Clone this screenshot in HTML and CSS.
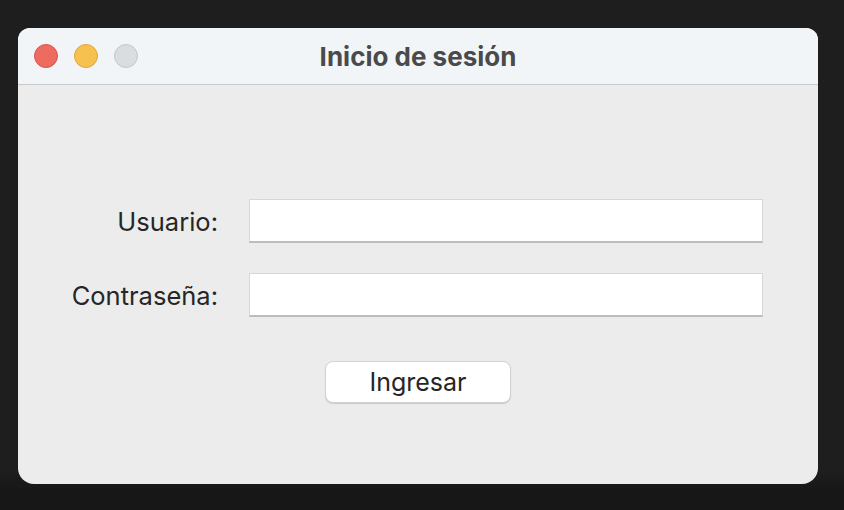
FILE: index.html
```html
<!DOCTYPE html>
<html lang="es">
<head>
<meta charset="utf-8">
<title>Inicio de sesión</title>
<link rel="stylesheet" href="styles.css">
</head>
<body>
<div class="window">
  <div class="titlebar">
    <div class="lights">
      <span class="light red"></span>
      <span class="light yellow"></span>
      <span class="light gray"></span>
    </div>
    <div class="title">Inicio de sesión</div>
  </div>
  <div class="content">
    <form class="form">
      <label class="label" for="u">Usuario:</label>
      <input class="field" id="u" type="text">
      <label class="label" for="p">Contraseña:</label>
      <input class="field" id="p" type="password">
    </form>
    <div class="actions">
      <button class="button" type="button">Ingresar</button>
    </div>
  </div>
</div>
</body>
</html>
```

FILE: styles.css
```css
* { box-sizing: border-box; }
html, body { margin: 0; padding: 0; }
body {
  width: 844px;
  height: 510px;
  background: linear-gradient(#1e1e1e 0, #1e1e1e 470px, #171717 490px);
  font-family: Inter, "Liberation Sans", sans-serif;
  padding: 28px 0 0 18px;
  overflow: hidden;
}
.window {
  width: 800px;
  height: 456px;
  background: #ececec;
  border-radius: 12px 12px 16px 16px;
  overflow: hidden;
  display: flex;
  flex-direction: column;
}
.titlebar {
  height: 57px;
  flex: none;
  background: #f2f5f8;
  border-bottom: 1px solid #c9c9c9;
  display: flex;
  align-items: center;
  position: relative;
}
.lights {
  display: flex;
  gap: 16px;
  padding-left: 16px;
}
.light {
  width: 24px;
  height: 24px;
  border-radius: 50%;
  border: 1px solid;
}
.red { background: #ee6b60; border-color: #d6564c; }
.yellow { background: #f6c14f; border-color: #dea73d; }
.gray { background: #dadde0; border-color: #c4c6c9; }
.title {
  position: absolute;
  left: 0;
  right: 0;
  text-align: center;
  font-weight: 700;
  font-size: 26px;
  color: #4a4a4a;
  pointer-events: none;
}
.content {
  flex: 1;
  padding-top: 114px;
}
.form {
  display: grid;
  grid-template-columns: 200px 514px;
  column-gap: 31px;
  row-gap: 30px;
  align-items: center;
  margin: 0;
}
.label {
  text-align: right;
  font-size: 25.5px;
  color: #262626;
}
.field {
  height: 44px;
  background: #fff;
  border: 1px solid #d6d6d6;
  border-bottom: 2px solid #bcbcbc;
  border-radius: 0;
  outline: none;
  font: inherit;
}
.actions {
  display: flex;
  justify-content: center;
  padding-top: 44px;
}
.button {
  width: 186px;
  height: 42px;
  background: #fff;
  border: 1px solid #d2d2d2;
  border-radius: 8px;
  box-shadow: 0 1px 1px rgba(0,0,0,0.15);
  font-family: Inter, "Liberation Sans", sans-serif;
  font-size: 25px;
  color: #262626;
  padding: 0;
}
```
